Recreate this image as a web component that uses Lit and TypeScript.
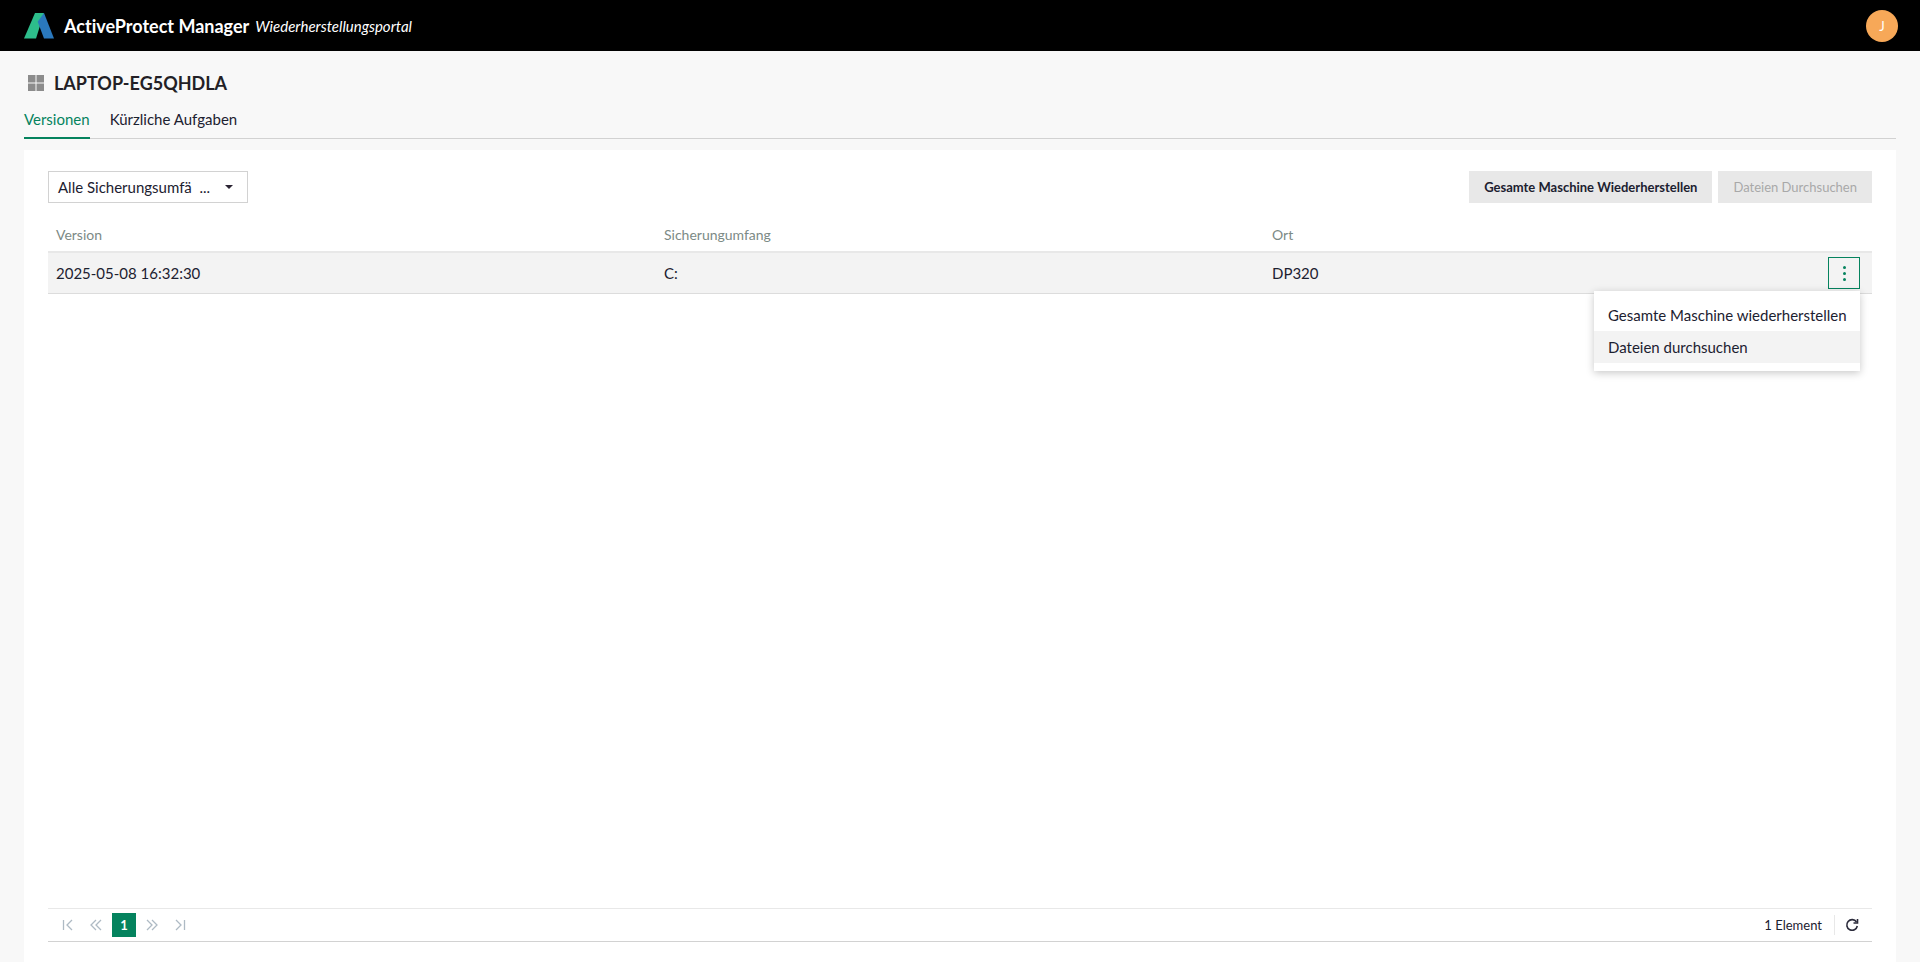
import { LitElement, html, css } from 'lit';
import { customElement } from 'lit/decorators.js';

@customElement('app-root')
export class AppRoot extends LitElement {
  static styles = css`
    :host {
      display: flex;
      flex-direction: column;
      height: 962px;
      overflow: hidden;
      background: #f8f8f8;
      color: #1c2130;
      font-family: Lato, sans-serif;
      font-size: 15px;
      font-variant-ligatures: none;
    }
    .top {
      height: 51px;
      flex: none;
      background: #000;
      color: #fff;
      display: flex;
      align-items: center;
      padding: 0 22px 0 24px;
    }
    .logo { width: 30px; height: 26px; margin-right: 10px; }
    .brand { font-size: 18px; font-weight: 700; margin-right: 6px; }
    .portal { font-style: italic; }
    .avatar {
      margin-left: auto;
      width: 32px;
      height: 32px;
      border-radius: 50%;
      background: #f7a858;
      display: flex;
      align-items: center;
      justify-content: center;
      font-size: 13px;
    }
    .head { flex: none; padding: 0 24px; }
    .host-row {
      display: flex;
      align-items: center;
      gap: 10px;
      height: 34px;
      margin-top: 15px;
      padding-left: 4px;
    }
    .host-row svg { width: 16px; height: 16px; }
    .host-name { font-size: 18px; font-weight: 700; color: #231f26; }
    .tabs {
      display: flex;
      gap: 20px;
      height: 39px;
      border-bottom: 1px solid #d2d2d2;
      box-sizing: border-box;
    }
    .tab {
      display: flex;
      align-items: center;
      height: 39px;
      box-sizing: border-box;
      border-bottom: 2px solid transparent;
    }
    .tab.on { color: #05835e; border-bottom-color: #05835e; }
    .panel {
      position: relative;
      flex: 1;
      min-height: 0;
      margin: 11px 24px 0;
      padding: 21px 24px 20px;
      background: #fff;
      display: flex;
      flex-direction: column;
    }
    .tools { display: flex; align-items: center; gap: 6px; flex: none; }
    .select {
      width: 200px;
      height: 32px;
      box-sizing: border-box;
      border: 1px solid #d2d2d2;
      display: flex;
      align-items: center;
      padding: 0 14px 0 9px;
      margin-right: auto;
    }
    .select span { flex: 1; }
    .caret {
      width: 0;
      height: 0;
      border-left: 4px solid transparent;
      border-right: 4px solid transparent;
      border-top: 4px solid #2b2433;
    }
    .btn {
      height: 32px;
      display: flex;
      align-items: center;
      padding: 0 15px;
      background: #e8e8e8;
      font-size: 13px;
      font-weight: 700;
    }
    .btn.off { color: #a8a8a8; font-weight: 400; }
    .cols {
      display: grid;
      grid-template-columns: 608px 608px 1fr;
      padding: 0 8px;
    }
    .thead {
      height: 48px;
      box-sizing: border-box;
      align-items: end;
      padding-bottom: 8px;
      font-size: 14px;
      color: #7c8a86;
    }
    .row {
      height: 43px;
      box-sizing: border-box;
      align-items: center;
      background: #f3f3f3;
      border-top: 2px solid #e8e8e8;
      border-bottom: 1px solid #dcdcdc;
      position: relative;
    }
    .more {
      position: absolute;
      right: 12px;
      top: 4px;
      width: 32px;
      height: 32px;
      box-sizing: border-box;
      border: 1px solid #05835e;
      display: flex;
      flex-direction: column;
      align-items: center;
      justify-content: center;
      gap: 3px;
    }
    .more i { width: 3px; height: 3px; border-radius: 50%; background: #05835e; }
    .menu {
      position: absolute;
      right: 36px;
      top: 141px;
      width: 266px;
      padding: 8px 0;
      background: #fff;
      box-shadow: 0 2px 8px rgba(0, 0, 0, 0.22);
    }
    .menu div { height: 32px; display: flex; align-items: center; padding-left: 14px; }
    .menu div.hover { background: #f3f3f3; }
    .spacer { flex: 1; }
    .pager {
      flex: none;
      height: 32px;
      border-top: 1px solid #e8e8e8;
      border-bottom: 1px solid #d2d2d2;
      display: flex;
      align-items: center;
      padding-left: 6px;
      font-size: 13px;
    }
    .pg { width: 28px; height: 24px; display: flex; align-items: center; justify-content: center; }
    .pg svg { width: 14px; height: 12px; fill: none; stroke: #aebac4; stroke-width: 1.3; }
    .num {
      width: 24px;
      height: 24px;
      margin: 0 2px;
      background: #05835e;
      color: #fff;
      display: flex;
      align-items: center;
      justify-content: center;
      font-weight: 700;
    }
    .count {
      margin-left: auto;
      padding-right: 12px;
      border-right: 1px solid #e8e8e8;
      height: 20px;
      display: flex;
      align-items: center;
    }
    .refresh { width: 14px; height: 14px; margin: 0 13px 0 10px; fill: none; stroke: #2b2b3b; stroke-width: 1.6; }
  `;

  render() {
    return html`
      <div class="top">
        <svg class="logo" viewBox="0 0 30 26">
          <path d="M0 25.500L11 0h9l-8 25.500z" fill="#2dbd8b" />
          <path d="M20 0l10 25.500H20L13.700 8.700z" fill="#2a78bd" />
        </svg>
        <span class="brand">ActiveProtect Manager</span>
        <span class="portal">Wiederherstellungsportal</span>
        <div class="avatar">J</div>
      </div>
      <div class="head">
        <div class="host-row">
          <svg viewBox="0 0 16 16" fill="#8c8c8c">
            <rect width="7.500" height="7.500" />
            <rect x="8.500" width="7.500" height="7.500" />
            <rect y="8.500" width="7.500" height="7.500" />
            <rect x="8.500" y="8.500" width="7.500" height="7.500" />
          </svg>
          <span class="host-name">LAPTOP-EG5QHDLA</span>
        </div>
        <div class="tabs">
          <div class="tab on">Versionen</div>
          <div class="tab">Kürzliche Aufgaben</div>
        </div>
      </div>
      <div class="panel">
        <div class="tools">
          <div class="select"><span>Alle Sicherungsumfä&nbsp; ...</span><i class="caret"></i></div>
          <div class="btn">Gesamte Maschine Wiederherstellen</div>
          <div class="btn off">Dateien Durchsuchen</div>
        </div>
        <div class="cols thead"><div>Version</div><div>Sicherungumfang</div><div>Ort</div></div>
        <div class="cols row">
          <div>2025-05-08 16:32:30</div><div>C:</div><div>DP320</div>
          <div class="more"><i></i><i></i><i></i></div>
        </div>
        <div class="menu">
          <div>Gesamte Maschine wiederherstellen</div>
          <div class="hover">Dateien durchsuchen</div>
        </div>
        <div class="spacer"></div>
        <div class="pager">
          <div class="pg"><svg viewBox="0 0 14 12"><path d="M2.500 1v10M11 1L6 6l5 5" /></svg></div>
          <div class="pg"><svg viewBox="0 0 14 12"><path d="M7 1L2 6l5 5M12 1L7 6l5 5" /></svg></div>
          <div class="num">1</div>
          <div class="pg"><svg viewBox="0 0 14 12"><path d="M2 1l5 5-5 5M7 1l5 5-5 5" /></svg></div>
          <div class="pg"><svg viewBox="0 0 14 12"><path d="M3 1l5 5-5 5M11.500 1v10" /></svg></div>
          <div class="count">1 Element</div>
          <svg class="refresh" viewBox="0 0 14 14"><path d="M11.500 4A5.300 5.300 0 1 0 12.300 8" /><path d="M12.500 1v4h-4" /></svg>
        </div>
      </div>
    `;
  }
}
